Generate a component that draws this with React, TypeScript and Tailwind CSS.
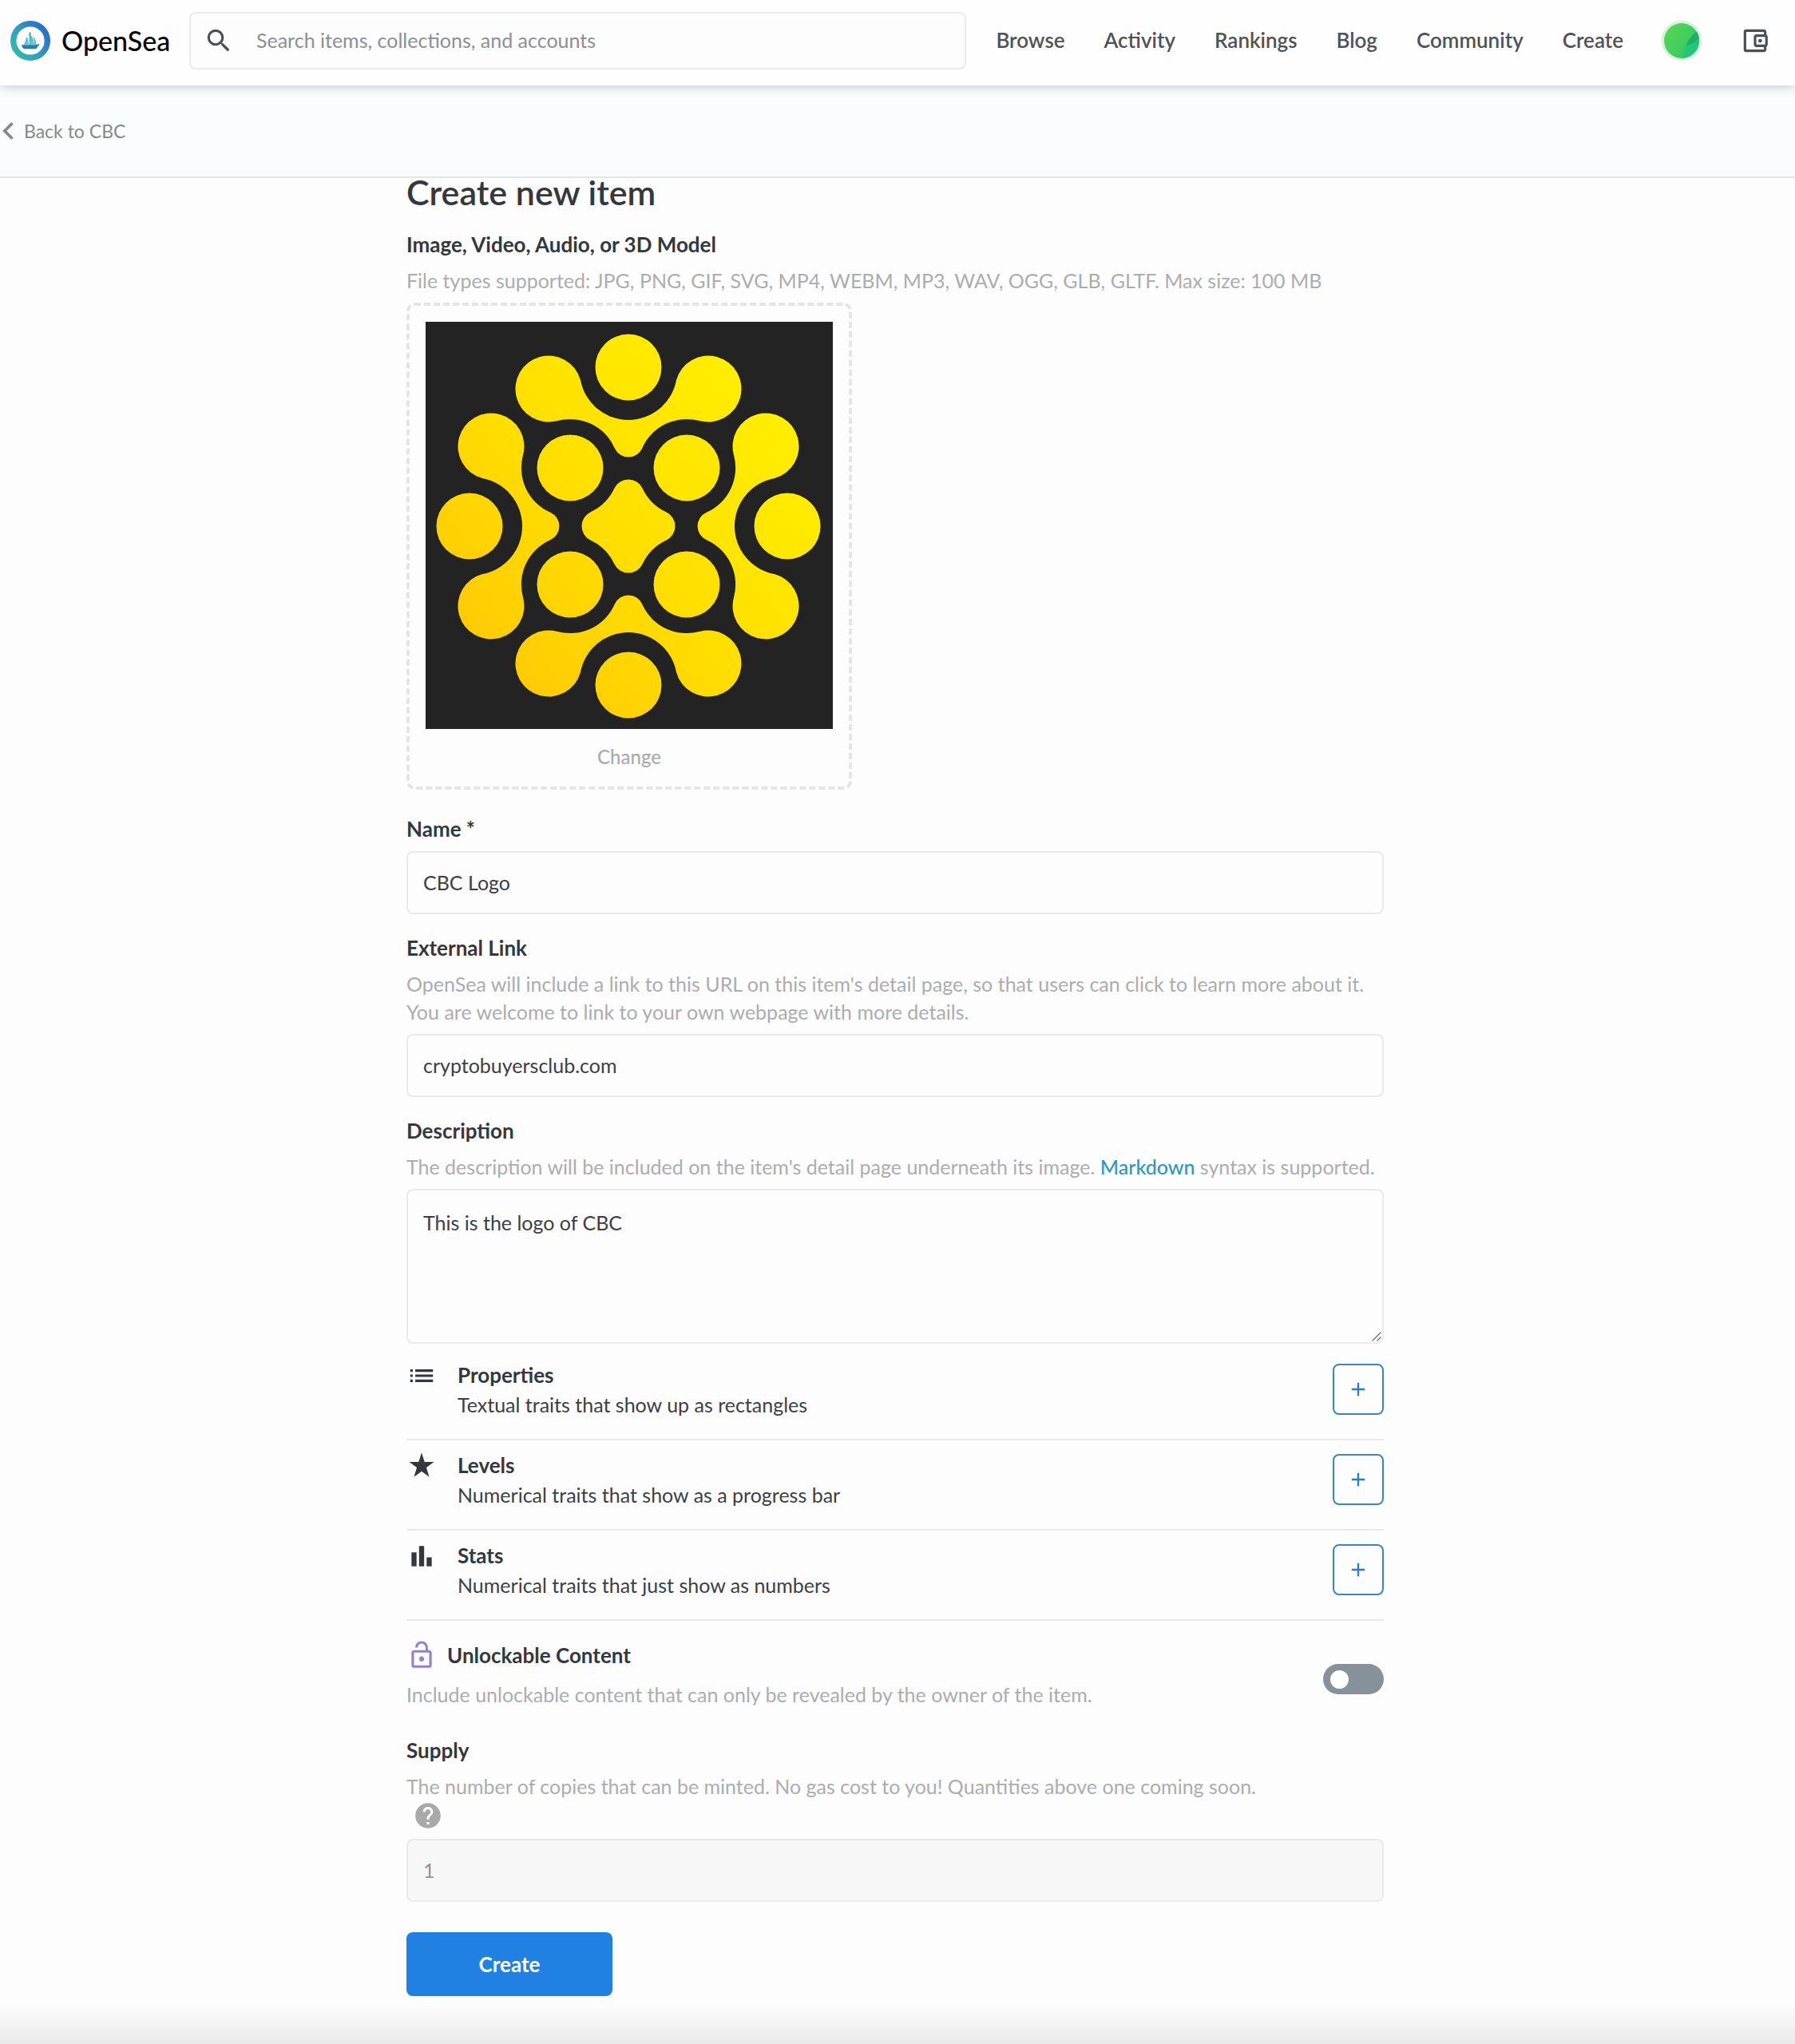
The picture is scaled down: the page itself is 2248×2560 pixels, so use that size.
import React, { useState } from 'react';
import {
    MdAdd,
    MdBarChart,
    MdHelp,
    MdList,
    MdLockOpen,
    MdOutlineAccountBalanceWallet,
    MdSearch,
} from 'react-icons/md';

const NAV_LINKS = ['Browse', 'Activity', 'Rankings', 'Blog', 'Community', 'Create'];

const StarIcon = ({ className }: { className?: string }) => (
    <svg viewBox="0 0 38 38" className={className} fill="currentColor" aria-hidden="true">
        <path d="M19 2.500L22.700 14H34.500L25 21.100L28.500 32.800L19 25.700L9.500 32.800L13 21.100L3.500 14H15.300Z" />
    </svg>
);

const TRAITS = [
    { title: 'Properties', text: 'Textual traits that show up as rectangles', Icon: MdList },
    { title: 'Levels', text: 'Numerical traits that show as a progress bar', Icon: StarIcon },
    { title: 'Stats', text: 'Numerical traits that just show as numbers', Icon: MdBarChart },
];

const inputClass =
    'block w-full h-[79px] px-[19px] pb-[2px] rounded-lg border-2 border-[#e8eaeb] text-[25px] outline-none bg-[#fdfdfd] text-[#3c4045] focus:border-[#2081e2] disabled:bg-[#f7f7f7] disabled:text-[#919395]';

const OpenSeaLogo = () => (
    <svg viewBox="0 0 50 50" className="w-[50px] h-[50px] shrink-0" aria-hidden="true">
        <defs>
            <linearGradient id="ring" x1="0.1" y1="0.8" x2="0.9" y2="0.2">
                <stop offset="0" stopColor="#2fb5b0" />
                <stop offset="0.45" stopColor="#2f9dc0" />
                <stop offset="1" stopColor="#2a72c4" />
            </linearGradient>
            <linearGradient id="sail" x1="0" y1="0" x2="1" y2="1">
                <stop offset="0" stopColor="#3fb0cc" />
                <stop offset="1" stopColor="#55dbe2" />
            </linearGradient>
        </defs>
        <circle cx="25" cy="25" r="21.300" fill="#fff" stroke="url(#ring)" strokeWidth="7.400" />
        <path d="M23.800 14.500h1.600v19h-1.600z" fill="#2d7f9f" />
        <path d="M20 20c-.6 4-1.200 7-3.200 10h6c.4-4-.4-7.500-2.800-10z" fill="url(#sail)" />
        <path d="M22.800 16.500c2 4.500 2 9.500.6 13.700h6c1.400-5.500-1.600-11-6.600-13.700z" fill="url(#sail)" />
        <path d="M28 19.500c2.400 3 2.900 7.500 1.600 10.700h2c1-4-.2-8.300-3.600-10.700z" fill="#3fa9c9" />
        <path d="M14 30.200h17l5-1.200v1.400c-1.600.8-2.600 4.800-5 4.800H18c-2.200 0-3.600-2.200-4-5z" fill="#28809c" />
    </svg>
);

const BLOB =
    'M194 73A61 61 0 0 0 314 73A41.500 41.500 0 1 1 343 124A61 61 0 0 0 271.300 158.200A18.900 18.900 0 0 1 236.700 158.200A61 61 0 0 0 165 124A41.500 41.500 0 1 1 194 73Z';

const STAR =
    'M236.300 208.800A19.500 19.500 0 0 1 271.700 208.800A61 61 0 0 0 301.200 238.300A19.500 19.500 0 0 1 301.200 273.700A61 61 0 0 0 271.700 303.200A19.500 19.500 0 0 1 236.300 303.200A61 61 0 0 0 206.800 273.700A19.500 19.500 0 0 1 206.800 238.300A61 61 0 0 0 236.300 208.800Z';

const DOTS = [
    [254, 57],
    [254, 455],
    [55, 256],
    [453, 256],
    [181, 183],
    [327, 183],
    [181, 329],
    [327, 329],
];

const ItemPreview = () => (
    <svg viewBox="0 0 510 510" className="block w-full" role="img" aria-label="CBC Logo">
        <defs>
            <linearGradient id="gold" gradientUnits="userSpaceOnUse" x1="60" y1="430" x2="430" y2="100">
                <stop offset="0" stopColor="#ffc905" />
                <stop offset="0.5" stopColor="#ffdf00" />
                <stop offset="1" stopColor="#ffee00" />
            </linearGradient>
            <mask id="shapes">
                {[0, 90, 180, 270].map((angle) => (
                    <path key={angle} d={BLOB} fill="#fff" transform={`rotate(${angle} 254 256)`} />
                ))}
                <path d={STAR} fill="#fff" />
                {DOTS.map(([x, y]) => (
                    <circle key={`${x}-${y}`} cx={x} cy={y} r="41.500" fill="#fff" />
                ))}
            </mask>
        </defs>
        <rect width="510" height="510" fill="#232323" />
        <rect width="510" height="510" fill="url(#gold)" mask="url(#shapes)" />
    </svg>
);

const Header = () => (
    <header className="relative z-10 flex items-center h-[107px] pl-[13px] pr-[31px] pb-[6px] bg-[#fefefe] shadow-[0_2px_12px_rgba(70,90,100,0.3)]">
        <a href="#" className="flex items-center gap-[14px] shrink-0">
            <OpenSeaLogo />
            <span className="w-[135px] text-[34px] leading-10 font-medium text-black">OpenSea</span>
        </a>
        <label className="ml-[25px] flex grow items-center h-[72px] px-4 rounded-lg border-2 border-[#e8eaeb] bg-[#fdfdfd]">
            <MdSearch className="w-[38px] h-[38px] shrink-0 text-[#4c5054]" />
            <input
                type="search"
                aria-label="Search"
                placeholder="Search items, collections, and accounts"
                className="ml-[28px] grow bg-transparent text-[25px] outline-none placeholder:text-[#8a9094] placeholder:opacity-100"
            />
        </label>
        <nav className="ml-[37px] flex items-center gap-[49px] shrink-0">
            {NAV_LINKS.map((name) => (
                <a key={name} href="#" className="text-[26px] font-semibold text-[#4f5356] hover:text-black">
                    {name}
                </a>
            ))}
        </nav>
        <button aria-label="Account" className="ml-[48px] shrink-0 rounded-full border-3 border-[#d5f0dc] overflow-hidden">
            <svg viewBox="0 0 44 44" className="block w-[44px] h-[44px]">
                <defs>
                    <linearGradient id="avatar" x1="0.2" y1="0.2" x2="1" y2="0.7">
                        <stop offset="0" stopColor="#52d455" />
                        <stop offset="0.55" stopColor="#3fcd60" />
                        <stop offset="1" stopColor="#2fbf66" />
                    </linearGradient>
                </defs>
                <rect width="44" height="44" fill="url(#avatar)" />
                <path d="M44 10C34 18 25 30 23 44h21z" fill="#1fc878" />
                <path d="M44 8C38 12 31 19 27 29c6-2 13-5 17-11z" fill="#22ad64" />
            </svg>
        </button>
        <button aria-label="Wallet" className="ml-[48px] shrink-0">
            <MdOutlineAccountBalanceWallet className="w-[38px] h-[38px] text-[#4c5054]" />
        </button>
    </header>
);

interface FieldProps {
    id: string;
    label: string;
    help?: React.ReactNode;
    className?: string;
    children: React.ReactNode;
}

const Field = ({ id, label, help, className = 'mt-6', children }: FieldProps) => (
    <div className={className}>
        <label htmlFor={id} className="block text-[26px] leading-9 font-bold text-[#34383d]">
            {label}
        </label>
        {help && <div className="mt-[10px] text-[25px] leading-[35px] text-[#acadae]">{help}</div>}
        <div className="mt-[10px]">{children}</div>
    </div>
);

const App = () => {
    const [unlockable, setUnlockable] = useState(false);

    return (
        <div className="min-h-screen flex flex-col bg-[#fdfdfd] font-['Lato','Open_Sans',sans-serif] text-[#34383d]">
            <Header />

            <div className="flex items-center h-[116px] border-b-2 border-[#e1e6e8] bg-[#fafdfd]">
                <a href="#" className="flex items-center gap-[13px] pl-[3px] text-[23px] text-[#86898b]">
                    <svg viewBox="8 6 7.410 12" className="w-[14px] h-[22px]" fill="currentColor" aria-hidden="true">
                        <path d="M15.410 7.410L14 6l-6 6 6 6 1.410-1.410L10.830 12z" />
                    </svg>
                    Back to CBC
                </a>
            </div>

            <main className="w-full pr-[6px]">
                <form className="w-full max-w-[1224px] mx-auto" onSubmit={(e) => e.preventDefault()}>
                    <h1 className="text-[43px] leading-9 font-semibold">Create new item</h1>

                    <Field
                        id="media"
                        label="Image, Video, Audio, or 3D Model"
                        help="File types supported: JPG, PNG, GIF, SVG, MP4, WEBM, MP3, WAV, OGG, GLB, GLTF. Max size: 100 MB"
                        className="mt-[29px]"
                    >
                        <div className="w-[558px] p-[20px] rounded-[10px] border-4 border-dashed border-[#e5e5e6]">
                            <ItemPreview />
                            <button
                                id="media"
                                type="button"
                                className="block w-full mt-[17px] text-[24px] leading-[35px] font-medium text-[#a9abad]"
                            >
                                Change
                            </button>
                        </div>
                    </Field>

                    <Field id="name" label="Name *" className="mt-[31px]">
                        <input id="name" type="text" defaultValue="CBC Logo" className={inputClass} />
                    </Field>

                    <Field
                        id="link"
                        label="External Link"
                        help="OpenSea will include a link to this URL on this item's detail page, so that users can click to learn more about it. You are welcome to link to your own webpage with more details."
                    >
                        <input id="link" type="text" defaultValue="cryptobuyersclub.com" className={inputClass} />
                    </Field>

                    <Field
                        id="description"
                        label="Description"
                        help={
                            <>
                                The description will be included on the item's detail page underneath its image.{' '}
                                <a href="#" className="font-medium text-[#2b98c4]">Markdown</a> syntax is supported.
                            </>
                        }
                    >
                        <div className="relative">
                            <textarea
                                id="description"
                                defaultValue="This is the logo of CBC"
                                className="block w-full h-[194px] px-[19px] py-[22px] rounded-lg border-2 border-[#e8eaeb] bg-[#fdfdfd] text-[25px] leading-9 text-[#3c4045] resize-none outline-none focus:border-[#2081e2]"
                            />
                            <svg
                                viewBox="0 0 12 12"
                                className="absolute right-[3px] bottom-[3px] w-3 h-3 pointer-events-none"
                                stroke="#6b6e70"
                                strokeWidth="1.300"
                                aria-hidden="true"
                            >
                                <path d="M0.500 11.500L11.500 0.500M6.500 11.500L11.500 6.500" />
                            </svg>
                        </div>
                    </Field>

                    <div className="mt-2">
                        {TRAITS.map(({ title, text, Icon }) => (
                            <div key={title} className="flex items-start pt-[17px] pb-6 border-b-2 border-[#e8eaeb]">
                                <Icon className="w-[38px] h-[38px] -mt-1 shrink-0 text-[#34383d]" />
                                <div className="ml-[26px] -mt-1 grow leading-[37px]">
                                    <div className="text-[26px] font-bold">{title}</div>
                                    <div className="text-[25px] text-[#3c4045]">{text}</div>
                                </div>
                                <button
                                    type="button"
                                    aria-label={`Add ${title}`}
                                    className="flex items-center justify-center w-16 h-16 shrink-0 rounded-lg border-2 border-[#3a84c8] text-[#2a7cc8] hover:bg-blue-50"
                                >
                                    <MdAdd className="w-7 h-7" />
                                </button>
                            </div>
                        ))}
                    </div>

                    <div className="mt-6 flex items-center justify-between">
                        <div>
                            <label htmlFor="unlockable" className="flex items-center gap-[13px] text-[26px] leading-[38px] font-bold">
                                <MdLockOpen className="w-[38px] h-[38px] text-[#9480d6]" />
                                Unlockable Content
                            </label>
                            <p className="mt-[13px] text-[25px] leading-[35px] text-[#acadae]">
                                Include unlockable content that can only be revealed by the owner of the item.
                            </p>
                        </div>
                        <input
                            id="unlockable"
                            type="checkbox"
                            role="switch"
                            checked={unlockable}
                            onChange={(e) => setUnlockable(e.target.checked)}
                            className="mt-3 flex items-center w-[76px] h-[38px] shrink-0 appearance-none rounded-full bg-[#87919a] px-[9px] checked:justify-end checked:bg-[#2081e2] before:block before:w-[23px] before:h-[23px] before:rounded-full before:bg-white"
                        />
                    </div>

                    <Field
                        id="supply"
                        label="Supply"
                        help={
                            <>
                                The number of copies that can be minted. No gas cost to you! Quantities above one coming soon.
                                <MdHelp className="block ml-2 w-[38px] h-[38px] text-[#a9a9a9]" />
                            </>
                        }
                        className="mt-[34px]"
                    >
                        <input id="supply" type="text" defaultValue="1" disabled className={inputClass} />
                    </Field>

                    <button
                        type="submit"
                        className="mt-[38px] w-[258px] h-20 rounded-lg bg-[#2081e2] text-[26px] font-bold text-white hover:bg-[#1868b7]"
                    >
                        Create
                    </button>
                </form>
            </main>

            <div className="mt-auto h-12 bg-linear-to-b from-[#fdfdfd] to-[#e9e9e9]" />
        </div>
    );
};

export default App;
